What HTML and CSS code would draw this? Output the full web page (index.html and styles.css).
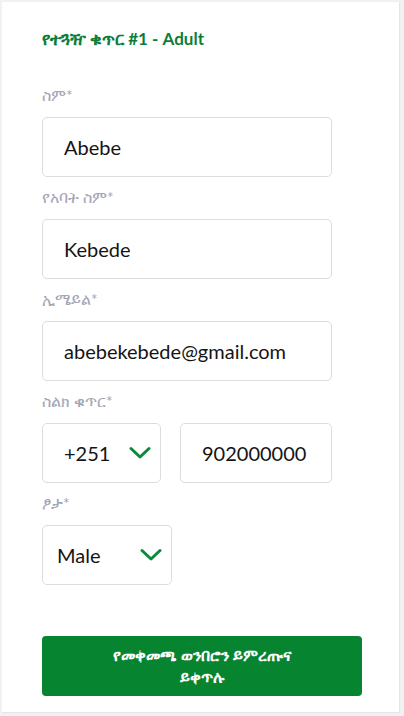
FILE: index.html
```html
<!DOCTYPE html>
<html lang="am">
<head>
<meta charset="utf-8">
<title>Passenger</title>
<link rel="stylesheet" href="styles.css">
</head>
<body>
<div class="card">
  <h2 class="title">የተጓዥ ቁጥር #1 - Adult</h2>
  <div class="field">
    <label class="label">ስም*</label>
    <div class="input wide">Abebe</div>
  </div>
  <div class="field">
    <label class="label">የአባት ስም*</label>
    <div class="input wide">Kebede</div>
  </div>
  <div class="field">
    <label class="label">ኢሜይል*</label>
    <div class="input wide">abebekebede@gmail.com</div>
  </div>
  <div class="field">
    <label class="label">ስልክ ቁጥር*</label>
    <div class="row">
      <div class="input select code"><span>+251</span>
        <svg class="chev" width="22" height="14" viewBox="0 0 22 14"><path d="M2 2.5 L11 11 L20 2.5" fill="none" stroke="#0b8a3a" stroke-width="3" stroke-linecap="round" stroke-linejoin="round"/></svg>
      </div>
      <div class="input phone">902000000</div>
    </div>
  </div>
  <div class="field">
    <label class="label">ፆታ*</label>
    <div class="input select gender"><span>Male</span>
      <svg class="chev" width="22" height="14" viewBox="0 0 22 14"><path d="M2 2.5 L11 11 L20 2.5" fill="none" stroke="#0b8a3a" stroke-width="3" stroke-linecap="round" stroke-linejoin="round"/></svg>
    </div>
  </div>
  <button class="btn"><span>የመቀመጫ ወንበሮን ይምረጡና ይቀጥሉ</span></button>
</div>
</body>
</html>
```
FILE: styles.css
```css
html, body {
  margin: 0;
  padding: 0;
}
body {
  background: #f1f1f1;
  font-family: Lato, "Noto Sans", sans-serif;
  padding: 2px 0 0 2px;
  width: 404px;
  height: 716px;
  box-sizing: border-box;
}
.card {
  background: #fff;
  width: 398px;
  height: 711px;
  box-sizing: border-box;
  border-right: 1px solid #e6e6e6;
  border-bottom: 1px solid #e6e6e6;
  padding: 27px 39px 0 40px;
  display: flex;
  flex-direction: column;
}
.title {
  margin: 0 0 36px;
  font-size: 17px;
  line-height: 20px;
  font-weight: 700;
  color: #0b7d3a;
}
.field {
  display: flex;
  flex-direction: column;
  gap: 12px;
  margin-bottom: 10px;
}
.label {
  font-size: 15.5px;
  line-height: 20px;
  color: #a4a6b6;
}
.input {
  height: 60px;
  box-sizing: border-box;
  border: 1px solid #dcdde3;
  border-radius: 5px;
  background: #fff;
  font-size: 20px;
  color: #141414;
  display: flex;
  align-items: center;
  padding-left: 21px;
}
.wide {
  width: 290px;
}
.row {
  display: flex;
  gap: 19px;
}
.select {
  justify-content: space-between;
  padding-right: 9px;
}
.code {
  width: 119px;
}
.phone {
  width: 152px;
}
.gender {
  width: 130px;
  padding-left: 14px;
}
.chev {
  display: block;
}
.btn {
  margin-top: 41px;
  width: 320px;
  height: 60px;
  border: none;
  border-radius: 4px;
  background: #078430;
  color: #fff;
  font-family: Lato, "Noto Sans", sans-serif;
  font-weight: 700;
  font-size: 15.5px;
  line-height: 22px;
  padding: 0;
  display: flex;
  align-items: center;
  justify-content: center;
}
.btn span {
  display: block;
  max-width: 200px;
  text-align: center;
}
```
